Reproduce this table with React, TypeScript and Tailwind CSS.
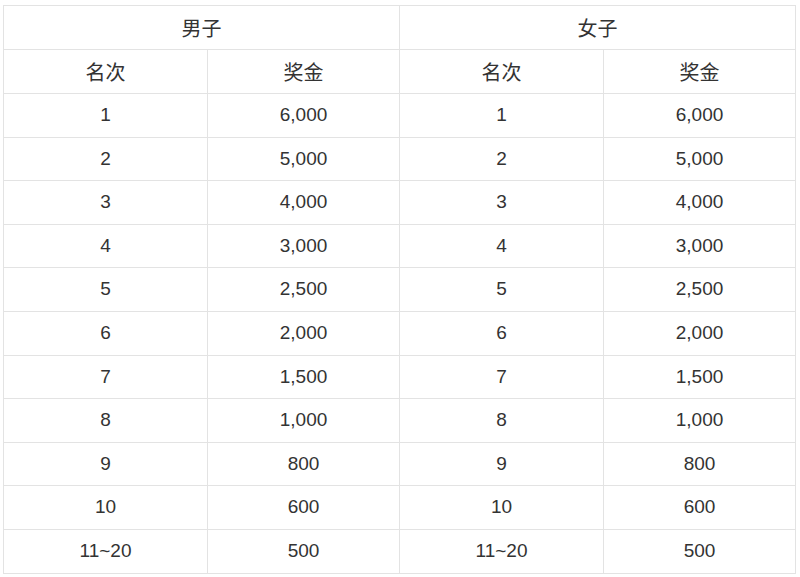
import React from "react";

const rows: [string, string][] = [
  ["1", "6,000"],
  ["2", "5,000"],
  ["3", "4,000"],
  ["4", "3,000"],
  ["5", "2,500"],
  ["6", "2,000"],
  ["7", "1,500"],
  ["8", "1,000"],
  ["9", "800"],
  ["10", "600"],
  ["11~20", "500"],
];

export default function App() {
  const cell = "border border-[#e3e3e3] text-center align-middle p-0";
  const head = `${cell} font-normal pt-[3px] text-[20px]`;
  return (
    <div
      className="w-[800px] h-[577px] bg-white pt-[5px] pl-[3px] text-[#333] text-[19px]"
      style={{ fontFamily: '"Liberation Sans", Arial, "Noto Sans CJK SC", sans-serif' }}
    >
      <table className="border-collapse table-fixed w-[793px]">
        <colgroup>
          <col className="w-[204px]" />
          <col className="w-[192px]" />
          <col className="w-[204px]" />
          <col className="w-[192px]" />
        </colgroup>
        <thead>
          <tr className="h-[44px]">
            <th colSpan={2} className={head}>男子</th>
            <th colSpan={2} className={head}>女子</th>
          </tr>
          <tr className="h-[44px]">
            <th className={head}>名次</th>
            <th className={head}>奖金</th>
            <th className={head}>名次</th>
            <th className={head}>奖金</th>
          </tr>
        </thead>
        <tbody>
          {rows.map(([r, p]) => (
            <tr key={r} className="h-[43.6px]">
              <td className={cell}>{r}</td>
              <td className={cell}>{p}</td>
              <td className={cell}>{r}</td>
              <td className={cell}>{p}</td>
            </tr>
          ))}
        </tbody>
      </table>
    </div>
  );
}
